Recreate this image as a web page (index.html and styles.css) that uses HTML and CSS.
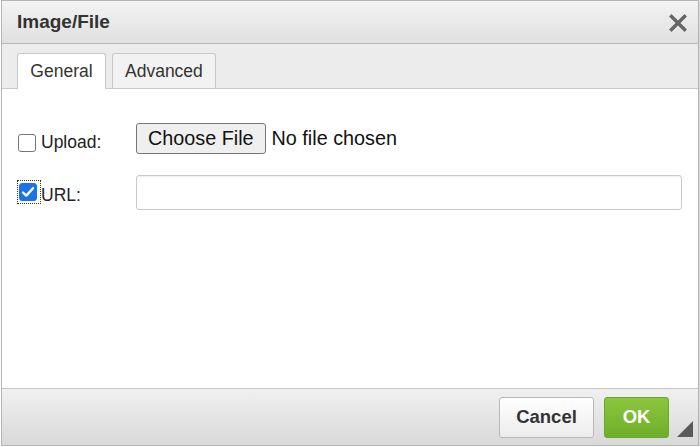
FILE: index.html
```html
<!DOCTYPE html>
<html>
<head>
<meta charset="utf-8">
<link rel="stylesheet" href="styles.css">
</head>
<body>
<div class="dialog">
  <div class="titlebar">
    <span class="title">Image/File</span>
    <svg class="close" width="18" height="18" viewBox="0 0 18 18"><path d="M2.5 2.5 L15.5 15.5 M15.5 2.5 L2.5 15.5" stroke="#666" stroke-width="3.4" stroke-linecap="square"/></svg>
  </div>
  <div class="tabs">
    <div class="tab active">General</div>
    <div class="tab">Advanced</div>
  </div>
  <div class="content">
    <div class="row row-upload">
      <label class="lbl"><span class="cb"></span><span>Upload:</span></label>
      <div class="filewrap"><span class="filebtn">Choose File</span><span class="nofile">No file chosen</span></div>
    </div>
    <div class="row row-url">
      <label class="lbl"><span class="focus"><span class="cb checked"><svg width="14" height="12" viewBox="0 0 14 12"><path d="M2 6.5 L5.3 9.6 L12 2.2" fill="none" stroke="#fff" stroke-width="2.4" stroke-linecap="round" stroke-linejoin="round"/></svg></span></span><span class="urltext">URL:</span></label>
      <div class="input"></div>
    </div>
  </div>
  <div class="footer">
    <div class="btn cancel">Cancel</div>
    <div class="btn ok">OK</div>
    <svg class="resize" width="16" height="16" viewBox="0 0 16 16"><path d="M16 0 L16 16 L0 16 Z" fill="#5a5a5a"/></svg>
  </div>
</div>
</body>
</html>
```
FILE: styles.css
```css
html, body { margin: 0; padding: 0; background: #fff; }
body { font-family: "Liberation Sans", Arial, sans-serif; color: #222; }
.dialog {
  width: 696px; height: 444px;
  border: 1px solid #b5b5b5;
  margin-left: 1px;
  display: flex; flex-direction: column;
  box-shadow: 1px 1px 1px rgba(0,0,0,0.15);
  background: #fff;
}
.titlebar {
  height: 42px;
  border-bottom: 1px solid #b8b8b8;
  background: linear-gradient(#f3f3f3, #e0e0e0);
  display: flex; align-items: center; justify-content: space-between;
  padding: 0 11px 0 15px;
}
.title { font-weight: bold; font-size: 19px; color: #333; }
.close { display: block; margin-top: 1px; }
.tabs {
  height: 44px;
  background: #ececec;
  border-bottom: 1px solid #c8c8c8;
  display: flex; align-items: flex-end; gap: 6px;
  padding-left: 15px;
}
.tab {
  height: 35px; box-sizing: border-box;
  border: 1px solid #c8c8c8; border-bottom: none;
  border-radius: 3px 3px 0 0;
  background: #f2f2f2;
  font-size: 17.5px; color: #333;
  padding: 0 12px;
  display: flex; align-items: center;
  padding-top: 1px;
}
.tab.active { background: #fff; height: 36px; margin-bottom: -1px; }
.tab:first-child { width: 89px; justify-content: center; padding: 0; }
.content { flex: 1; background: #fff; padding: 34px 16px 0 16px; display: flex; flex-direction: column; gap: 21px; }
.row { display: flex; align-items: center; }
.lbl { width: 119px; display: flex; align-items: center; font-size: 17.5px; color: #222; }
.cb {
  width: 16px; height: 16px; border: 1.5px solid #767676; border-radius: 3px;
  background: #fff; display: inline-flex; align-items: center; justify-content: center;
  margin-right: 5px; margin-left: 0;
}
.row-upload .lbl { padding-top: 8px; }
.cb.checked { background: #1a73e8; border-color: #1a73e8; margin: 0; }
.focus { outline: 1px dotted #333; padding: 2px 3px 2px 1px; display: inline-flex; margin-right: 1px; margin-top: -2px; }
.urltext { margin-top: 6px; }
.filewrap { display: flex; align-items: center; margin-left: -1px; }
.filebtn {
  height: 31px; box-sizing: border-box;
  border: 1px solid #767676; border-radius: 3px;
  background: #efefef;
  font-size: 19.8px; color: #111;
  padding: 0 11px; display: flex; align-items: center;
}
.nofile { font-size: 19.8px; color: #111; margin-left: 6px; }
.input {
  flex: 1; height: 35px; box-sizing: border-box;
  border: 1px solid #c9c9c9; border-radius: 3px; background: #fff;
  box-shadow: inset 0 1px 1px rgba(0,0,0,0.06);
  margin-left: -1px;
}
.footer {
  height: 56px;
  border-top: 1px solid #c4c4c4;
  background: linear-gradient(#f0f0f0, #d9d9d9);
  display: flex; align-items: center; justify-content: flex-end;
  padding-right: 29px; gap: 10px;
  position: relative;
}
.btn {
  height: 41px; box-sizing: border-box; border-radius: 3px;
  font-size: 18.5px; font-weight: bold;
  display: flex; align-items: center; justify-content: center;
}
.cancel { width: 95px; border: 1px solid #b8b8b8; background: linear-gradient(#ffffff, #ececec); color: #333; }
.ok { width: 65px; border: 1px solid #6aa629; background: linear-gradient(#8cc63f, #6fae2a); color: #fff; }
.resize { position: absolute; right: 5px; bottom: 8px; }
```
